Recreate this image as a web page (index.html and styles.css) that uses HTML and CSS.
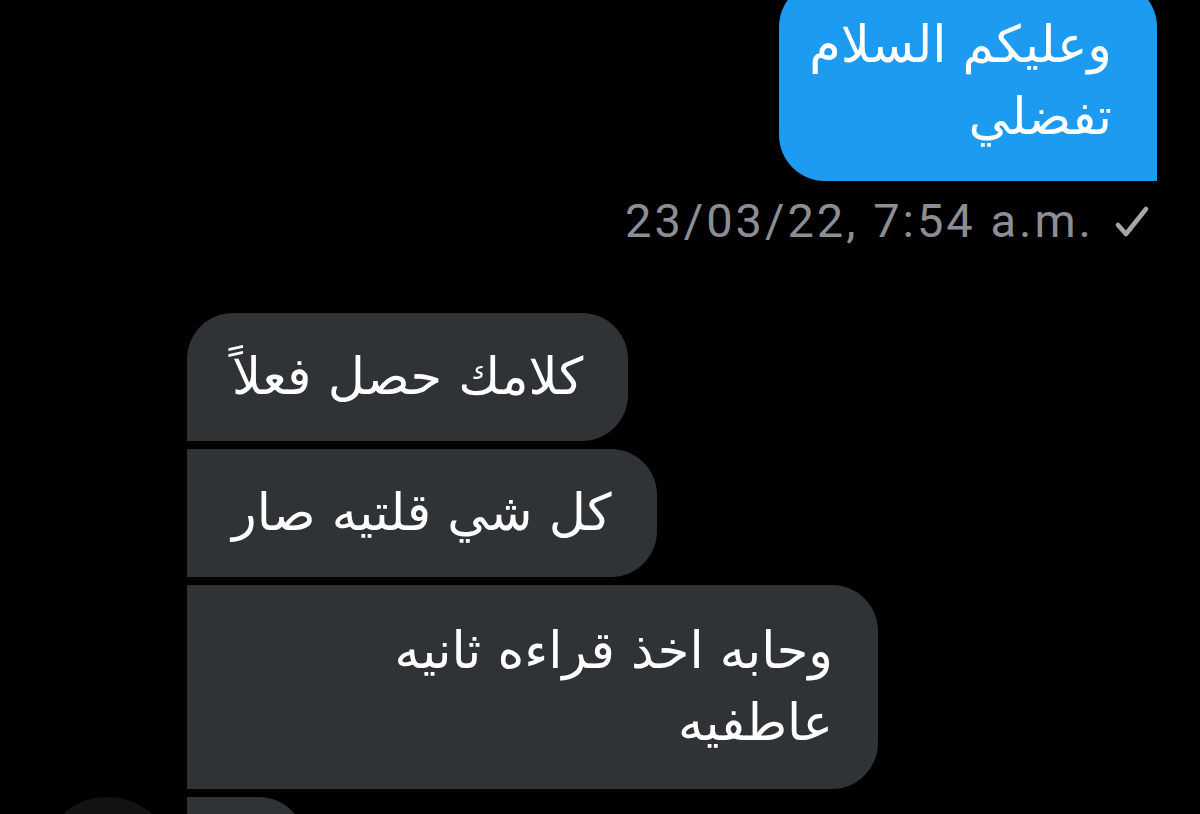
FILE: index.html
```html
<!DOCTYPE html>
<html lang="ar">
<head>
    <meta charset="UTF-8">
    <meta name="viewport" content="width=device-width, initial-scale=1.0">
    <title>Messages</title>
    <link rel="stylesheet" href="styles.css">
</head>
<body>
<div class="chat">
    <div class="row-out">
        <div class="bubble bubble-out" dir="rtl">وعليكم السلام<br>تفضلي</div>
    </div>
    <div class="meta">
        <span class="time">23/03/22, 7:54 a.m.</span>
        <svg class="check" width="36" height="36" viewBox="0 0 36 36">
            <path d="M4 21 L12 30 L32 5" fill="none" stroke="#a3a7ab" stroke-width="4.6" stroke-linecap="round" stroke-linejoin="round"/>
        </svg>
    </div>

    <div class="group-in">
        <div class="row-in">
            <div class="avatar-slot"></div>
            <div class="bubble bubble-in first" dir="rtl">كلامك حصل فعلاً</div>
        </div>
        <div class="row-in">
            <div class="avatar-slot"></div>
            <div class="bubble bubble-in" dir="rtl">كل شي قلتيه صار</div>
        </div>
        <div class="row-in">
            <div class="avatar-slot"></div>
            <div class="bubble bubble-in wide" dir="rtl">وحابه اخذ قراءه ثانيه<br>عاطفيه</div>
        </div>
        <div class="row-in">
            <div class="avatar-slot"><div class="avatar"></div></div>
            <div class="bubble-in last"></div>
        </div>
    </div>
</div>
</body>
</html>
```

FILE: styles.css
```css
body {
    margin: 0;
    padding: 0;
    background-color: #000;
    overflow: hidden;
    font-family: 'DejaVu Sans', 'Noto Sans', sans-serif;
}

.chat {
    display: flex;
    flex-direction: column;
    margin-top: -19px;
}

.row-out {
    display: flex;
    justify-content: flex-end;
    padding-right: 43px;
}

.bubble {
    color: #fff;
    font-size: 51px;
    line-height: 72px;
    padding: 28px 45px;
    text-align: right;
    white-space: nowrap;
    box-sizing: border-box;
}

.bubble-out {
    background-color: #1d9bf0;
    width: 378px;
    padding-left: 30px;
    border-radius: 46px 46px 0 46px;
}

.meta {
    display: flex;
    justify-content: flex-end;
    align-items: center;
    gap: 20px;
    padding-right: 50px;
    margin-top: 12px;
}

.time {
    font-family: 'Roboto', 'Liberation Sans', sans-serif;
    font-size: 47px;
    letter-spacing: 3px;
    color: #8b8f94;
}

.check {
    margin-top: 2px;
}

.group-in {
    display: flex;
    flex-direction: column;
    gap: 8px;
    margin-top: 65px;
}

.row-in {
    display: flex;
    align-items: flex-start;
}

.avatar-slot {
    width: 187px;
    flex-shrink: 0;
    position: relative;
}

.avatar {
    position: absolute;
    left: 41px;
    top: 0;
    width: 133px;
    height: 133px;
    border-radius: 50%;
    background-color: #141311;
}

.bubble-in {
    background-color: #2f3336;
    border-radius: 0 46px 46px 0;
}

.bubble-in.first {
    border-radius: 46px 46px 46px 0;
}

.bubble-in.wide {
    width: 691px;
    padding-top: 30px;
    padding-bottom: 30px;
}

.bubble-in.last {
    width: 118px;
    height: 128px;
}
```
